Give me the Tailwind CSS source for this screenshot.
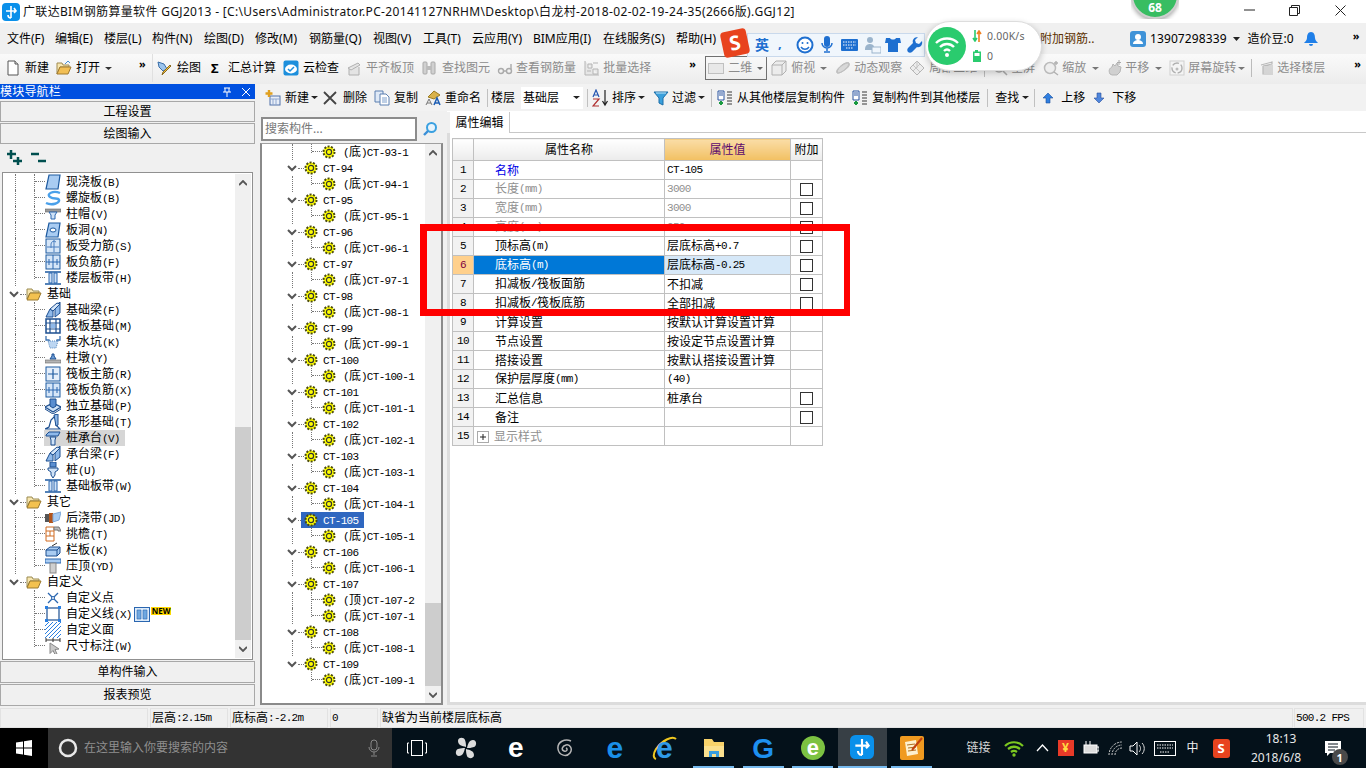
<!DOCTYPE html>
<html lang="zh">
<head>
<meta charset="utf-8">
<title>GGJ2013</title>
<script src="https://cdn.jsdelivr.net/npm/@tailwindcss/browser@4"></script>
</head>
<body class="m-0 overflow-hidden">
<svg class="absolute w-0 h-0" aria-hidden="true">
<defs>
<symbol id="gear" viewBox="0 0 14 14"><circle cx="7" cy="7" r="5.5" fill="#ffff00" stroke="#4a4a10" stroke-width="2" stroke-dasharray="2 1.4"/><circle cx="7" cy="7" r="2.6" fill="#ffff00" stroke="#333" stroke-width="1.2"/></symbol>
<symbol id="chev" viewBox="0 0 12 12"><path d="M2 4l4 4 4-4" fill="none" stroke="#555" stroke-width="2"/></symbol>
<symbol id="folder" viewBox="0 0 16 14"><path d="M1 2h5l1 2h6v2H4L1 12z" fill="#f7e6b0" stroke="#9a8a50"/><path d="M4 6h11l-3 7H1z" fill="#f3c14f" stroke="#9a7a30"/></symbol>
<symbol id="app" viewBox="0 0 18 18"><rect width="18" height="18" rx="4" fill="#0a90ea"/><path d="M9 3v12M4 8h10M9 15c-3 0-3-3-3-3M12 5l2 3-2 2" fill="none" stroke="#fff" stroke-width="1.6"/></symbol>
<symbol id="doc" viewBox="0 0 16 16"><path d="M3 1h7l3 3v11H3z" fill="#fff" stroke="#555"/><path d="M10 1v3h3" fill="#ddd" stroke="#555"/></symbol>
<symbol id="open" viewBox="0 0 16 16"><path d="M1 3h5l1 2h6v2H4l-3 7z" fill="#f7e6b0" stroke="#a08a50"/><path d="M4 7h11l-3 7H1z" fill="#f2bf55" stroke="#a07a30"/><path d="M9 4l3-3 2 2" fill="none" stroke="#4a90d0"/></symbol>
<symbol id="draw" viewBox="0 0 16 16"><path d="M1 2l6 2 3 5-4 2-4-4z" fill="#9cc4ec" stroke="#3a6ea8"/><path d="M14 6L7 13l-2 2 1-3 7-7z" fill="#f0c040" stroke="#8a6a20"/></symbol>
<symbol id="cloud" viewBox="0 0 16 16"><rect x=".5" y=".5" width="15" height="15" rx="2" fill="#1d8fdc"/><ellipse cx="8" cy="9" rx="6" ry="4.4" fill="#fff"/><path d="M5 9l2 2 4-4" fill="none" stroke="#1d8fdc" stroke-width="1.5"/></symbol>
<symbol id="g-flush" viewBox="0 0 16 16"><path d="M2 8l10-5 2 2-9 5zM3 9v6h10V7" fill="#e4e4e4" stroke="#b0b0b0"/></symbol>
<symbol id="g-bino" viewBox="0 0 16 16"><rect x="2" y="2" width="4" height="12" rx="1" fill="#d0d0d0" stroke="#aaa"/><rect x="10" y="2" width="4" height="12" rx="1" fill="#d0d0d0" stroke="#aaa"/><path d="M6 6h4v4H6z" fill="#bbb"/></symbol>
<symbol id="g-glass" viewBox="0 0 16 16"><circle cx="4" cy="11" r="2.5" fill="none" stroke="#aaa" stroke-width="1.4"/><circle cx="12" cy="11" r="2.5" fill="none" stroke="#aaa" stroke-width="1.4"/><path d="M6.5 11h3M14 9V4" stroke="#aaa" fill="none" stroke-width="1.4"/></symbol>
<symbol id="g-batch" viewBox="0 0 16 16"><path d="M1 1v14h14M4 4h4v4H4zM9 9h5v5H9z" fill="#e6e6e6" stroke="#b5b5b5"/><path d="M3 11h4M9 3h5" stroke="#b5b5b5"/></symbol>
<symbol id="g-cube" viewBox="0 0 16 16"><path d="M1 5l4-4h10v10l-4 4H1z" fill="#ececec" stroke="#b0b0b0"/><path d="M1 5h10v10M11 5l4-4" fill="none" stroke="#b0b0b0"/></symbol>
<symbol id="g-orbit" viewBox="0 0 16 16"><path d="M2 13C5 14 14 8 14 3 11 1 2 7 2 13z" fill="#d8d8d8" stroke="#b8b8b8"/><ellipse cx="8" cy="8" rx="7.5" ry="2.5" transform="rotate(-35 8 8)" fill="none" stroke="#c0c0c0"/></symbol>
<symbol id="g-part" viewBox="0 0 16 16"><path d="M1 8l7-7 7 7-7 7z" fill="#ececec" stroke="#b5b5b5"/><path d="M4 5l7 7M8 1v7M11 4l-7 7" stroke="#c5c5c5" fill="none"/></symbol>
<symbol id="g-zoom" viewBox="0 0 16 16"><circle cx="7" cy="8" r="5.5" fill="#eee" stroke="#bbb" stroke-width="1.5"/><path d="M11 12l4 3M13 1v4M11 3h4" stroke="#b0b0b0" stroke-width="1.4" fill="none"/></symbol>
<symbol id="g-pan" viewBox="0 0 16 16"><path d="M3 14C1 10 3 8 5 7l1-3 2 2 2-3 1 3 3 1-1 5-3 3H5z" fill="#d0d0d0" stroke="#b5b5b5"/><path d="M12 0v5M10 2.500h4" stroke="#aaa" fill="none"/></symbol>
<symbol id="g-rot" viewBox="0 0 16 16"><rect x="1" y="1" width="14" height="14" fill="#f4f4f4" stroke="#d0d0d0"/><circle cx="8" cy="8" r="5" fill="none" stroke="#b0b0b0" stroke-width="1.4" stroke-dasharray="7 2"/><circle cx="8" cy="9" r="1.500" fill="#bbb"/></symbol>
<symbol id="g-layer" viewBox="0 0 16 16"><path d="M2 5l11-3v2L4 6h10M4 6v2h10M4 8v2h10M4 10v2h10M4 12v2h10" fill="none" stroke="#b8b8b8" stroke-width="1.200"/></symbol>
<symbol id="g-screen" viewBox="0 0 16 16"><circle cx="7" cy="7" r="5" fill="#eee" stroke="#aaa" stroke-width="1.400"/><path d="M11 11l4 4" stroke="#aaa" stroke-width="1.600"/></symbol>
<symbol id="new2" viewBox="0 0 16 16"><rect x="5" y="6" width="10" height="9" fill="#e8eef8" stroke="#5070a8"/><path d="M5 9h10M8 9v6M11 9v6" stroke="#90a8d0"/><path d="M4 0v7M.5 3.500h7" stroke="#e0a020" stroke-width="2.400"/></symbol>
<symbol id="copy" viewBox="0 0 16 16"><path d="M1 1h8v11H1z" fill="#dfe9f6" stroke="#5b7fb0"/><path d="M6 4h6l3 3v8H6z" fill="#fff" stroke="#5b7fb0"/><path d="M8 8h5M8 10h5M8 12h5" stroke="#7fa0cc"/></symbol>
<symbol id="rename" viewBox="0 0 16 16"><path d="M3 7l6-6 6 4-6 4z" fill="#d9b24a" stroke="#9a7a20"/><path d="M1 15l3-6 3 6M2 13h4" fill="none" stroke="#777"/><path d="M9 15l3-7 3 7M10 13h4" fill="none" stroke="#1f5fb4" stroke-width="1.500"/></symbol>
<symbol id="sort" viewBox="0 0 18 18"><path d="M1 8l3-7 3 7M2 6h4" fill="none" stroke="#2555b0" stroke-width="1.200"/><path d="M1 10h6L1 17h6" fill="none" stroke="#b03030" stroke-width="1.200"/><path d="M13 1v15M10.500 12l2.500 4 2.500-4" fill="none" stroke="#222" stroke-width="1.200"/></symbol>
<symbol id="funnel" viewBox="0 0 16 16"><path d="M1 2h14L10 8v7l-4-2V8z" fill="#3aa0dc" stroke="#1c6ea8"/><path d="M3 3h10" stroke="#bfe4f8"/></symbol>
<symbol id="cp1" viewBox="0 0 16 16"><path d="M1 1h6v9H1z" fill="#fff" stroke="#2a55a0"/><path d="M2 3h4M2 5h4" stroke="#2a55a0"/><path d="M10 2h5M10 5h5M10 8h5M10 11h5M10 14h5" stroke="#777" stroke-width="1.500"/><path d="M4 11v4M2 13h4" stroke="#1a9a40" stroke-width="2"/></symbol>
<symbol id="up" viewBox="0 0 12 12"><path d="M6 1l5 5H8v5H4V6H1z" fill="#2f7fe0" stroke="#1b4f9c" stroke-width=".6"/></symbol>
<symbol id="down" viewBox="0 0 12 12"><path d="M6 11L1 6h3V1h4v5h3z" fill="#4f86dc" stroke="#2a4f9c" stroke-width=".6"/></symbol>
<symbol id="i-slab" viewBox="0 0 16 16"><path d="M4 1h11l-2 14H1z" fill="#a9ccf2" stroke="#1d5aa0" stroke-width="1.200"/></symbol>
<symbol id="i-spiral" viewBox="0 0 16 16"><path d="M15 3C8 0 1 4 5 7s8 0 9 3-7 6-13 3" fill="none" stroke="#4aa0ea" stroke-width="2.400"/></symbol>
<symbol id="i-cap" viewBox="0 0 16 16"><rect y="3" width="16" height="3" fill="#9a9a9a" stroke="#666" stroke-width=".6"/><path d="M4 6h8l-2 3v4H6V9z" fill="#cfe2f7" stroke="#2a66b0"/></symbol>
<symbol id="i-hole" viewBox="0 0 16 16"><path d="M4 1h11l-2 14H1z" fill="#a9ccf2" stroke="#1d5aa0" stroke-width="1.200"/><ellipse cx="8" cy="8" rx="3" ry="2" fill="#fff" stroke="#1d5aa0"/></symbol>
<symbol id="i-force" viewBox="0 0 16 16"><rect x="1" y="1" width="14" height="14" fill="#d6e6f8" stroke="#1d5aa0"/><path d="M9 2v12M2 9h12M11 4a3 3 0 0 0-5 2v4" fill="none" stroke="#4a7fc0"/></symbol>
<symbol id="i-neg" viewBox="0 0 16 16"><rect x="1" y="1" width="14" height="14" fill="#d6e6f8" stroke="#1d5aa0"/><path d="M8 1v14M1 8h14M4 5v6M12 5v6" fill="none" stroke="#2a66b0"/></symbol>
<symbol id="i-band" viewBox="0 0 16 16"><path d="M0 2h16M0 14h16" stroke="#1d5aa0" stroke-width="1.500"/><path d="M4 3h3v10H4zM9 3h3v10H9z" fill="#cfe2f7" stroke="#2a66b0"/></symbol>
<symbol id="i-beam" viewBox="0 0 16 16"><path d="M1 15l4-8 3 2v6zM10 15V4l5-4v11z" fill="#8fb9ea" stroke="#1d4f90"/><path d="M5 7l7-6 3 1-7 7z" fill="#d6e6f8" stroke="#1d4f90"/></symbol>
<symbol id="i-raft" viewBox="0 0 16 16"><rect x="1" y="1" width="14" height="14" fill="#fff" stroke="#1d4f90" stroke-width="1.500"/><path d="M1 5h14M1 11h14M5 1v14M11 1v14" stroke="#1d4f90" stroke-width="1.200"/><rect x="6" y="6" width="4" height="4" fill="#8fb9ea"/></symbol>
<symbol id="i-pit" viewBox="0 0 16 16"><path d="M1 2v4h3l2 7h4l2-7h3V2" fill="none" stroke="#3a70b0" stroke-width="1.300"/><path d="M3 7h10l-2 7H5z" fill="#bcd6f2" stroke-dasharray="1 1" stroke="#5a8ac0"/></symbol>
<symbol id="i-pier" viewBox="0 0 16 16"><path d="M5 9l2-3V4h2v2l2 3z" fill="#6f9fd8" stroke="#1d4f90"/><rect y="10" width="16" height="3" fill="#b5b5b5" stroke="#666" stroke-width=".6"/></symbol>
<symbol id="i-main" viewBox="0 0 16 16"><rect x="1" y="1" width="14" height="14" fill="#e4eefa" stroke="#1d5aa0"/><path d="M8 3v10M3 8h10" stroke="#1d5aa0" stroke-width="1.200"/></symbol>
<symbol id="i-iso" viewBox="0 0 16 16"><path d="M0 9l8-4 8 4-8 5z" fill="#cfe2f7" stroke="#1d4f90" stroke-width="1.200"/><path d="M0 9v2l8 5 8-5V9" fill="none" stroke="#1d4f90"/><path d="M5 1h6v7l-3 2-3-2z" fill="#5a8ed0" stroke="#1d4f90"/></symbol>
<symbol id="i-strip" viewBox="0 0 16 16"><path d="M0 15l4-2 2-7 5-5v10l4 4z" fill="#fff" stroke="#1d4f90" stroke-width="1.200"/><path d="M9 1l4-1v11l-2 1z" fill="#8fb9ea" stroke="#1d4f90"/></symbol>
<symbol id="i-cap2" viewBox="0 0 16 16"><path d="M1 5l3-3h11l-2 4H1z" fill="#8fb9ea" stroke="#1d4f90"/><path d="M5 7h6l-1 3v5H6v-5z" fill="#cfe2f7" stroke="#1d4f90"/></symbol>
<symbol id="i-pile" viewBox="0 0 16 16"><rect x="5" y="0" width="6" height="5" fill="#5a8ed0" stroke="#1d4f90"/><path d="M3 6h10v2l-3 2v3l-2 3-2-3v-3L3 8z" fill="#cfe2f7" stroke="#1d4f90"/></symbol>
<symbol id="i-post" viewBox="0 0 16 16"><rect x="0" y="4" width="6" height="8" fill="#555"/><rect x="4" y="3" width="4" height="10" fill="#b3541a"/><path d="M8 4l8-2-2 8-6 2z" fill="#a9ccf2" stroke="#7fa8d8"/></symbol>
<symbol id="i-eave" viewBox="0 0 16 16"><path d="M1 1h8v14H1z" fill="#fff" stroke="#d06a20"/><path d="M1 5h8M1 10h8M5 5v5" stroke="#d06a20"/><path d="M9 1h5l2 4h-3v-1H9z" fill="#bbb" stroke="#777"/></symbol>
<symbol id="i-rail" viewBox="0 0 16 16"><path d="M1 8l4-3h10v6l-3 3H1z" fill="#a9ccf2" stroke="#1d4f90"/><path d="M1 8h11v6M12 8l3-3" fill="none" stroke="#1d4f90"/><path d="M7 4l5-3" stroke="#333"/></symbol>
<symbol id="i-coping" viewBox="0 0 16 16"><rect y="1" width="16" height="4" fill="#a9ccf2" stroke="#2a66b0"/><rect x="5" y="5" width="6" height="10" fill="#cfcfcf" stroke="#888"/></symbol>
<symbol id="i-pt" viewBox="0 0 16 16"><path d="M3 3l10 10M13 3L3 13" stroke="#2a66b0" stroke-width="1.300"/><circle cx="8" cy="8" r="1.500" fill="#fff" stroke="#2a66b0"/></symbol>
<symbol id="i-line" viewBox="0 0 16 16"><rect x="2" y="2" width="12" height="12" fill="#fff" stroke="#1d4f90" stroke-width="1.200"/><path d="M0 0h3v3H0zM13 0h3v3h-3zM0 13h3v3H0zM13 13h3v3h-3z" fill="#2a7fe0"/></symbol>
<symbol id="i-face" viewBox="0 0 16 16"><path d="M0 4l4-4M0 8l8-8M0 12L12 0M0 16L16 0M4 16L16 4M8 16l8-8M12 16l4-4" stroke="#2a7fe0" stroke-width="1"/></symbol>
<symbol id="i-dim" viewBox="0 0 16 16"><path d="M1 0v4M15 0v4M8 0v4M1 2h14" stroke="#333"/><path d="M5 5l9 6-4 .5L12 16l-2 .5-2-4-3 3z" fill="#c8c8c8" stroke="#888"/></symbol>
</defs>
</svg>

<div class="relative flex h-[768px] w-[1366px] flex-col overflow-hidden bg-[#f0f0f0] text-[12px] leading-4 text-black [font-family:'Noto_Sans','Noto_Sans_CJK_SC',sans-serif] [&_i]:not-italic [&_i]:[font-family:'Liberation_Mono',monospace] [&_i]:text-[11px] [&_i]:tracking-[-0.7px]">

  <!-- title bar -->
  <header class="flex h-[23px] shrink-0 items-center bg-white">
    <svg class="ml-[2px] h-[18px] w-[18px]"><use href="#app"/></svg>
    <span class="ml-[3px] whitespace-nowrap text-[12px] tracking-[0.33px] text-[#111]">广联达BIM钢筋算量软件 GGJ2013 - [C:\Users\Administrator.PC-20141127NRHM\Desktop\白龙村-2018-02-02-19-24-35(2666版).GGJ12]</span>
  </header>

  <!-- menu bar -->
  <nav class="flex h-[31px] shrink-0 items-center whitespace-nowrap bg-[#f0f0f0]">
    <span class="ml-[7px] w-[48px]">文件(F)</span><span class="w-[49px]">编辑(E)</span><span class="w-[48px]">楼层(L)</span><span class="w-[52px]">构件(N)</span><span class="w-[51px]">绘图(D)</span><span class="w-[54px]">修改(M)</span><span class="w-[64px]">钢筋量(Q)</span><span class="w-[50px]">视图(V)</span><span class="w-[49px]">工具(T)</span><span class="w-[61px]">云应用(Y)</span><span class="w-[70px]">BIM应用(I)</span><span class="w-[73px]">在线服务(S)</span><span class="w-[364px]">帮助(H)</span><span class="w-[90px] text-[#5c3000]">附加钢筋..</span>
    <svg class="h-4 w-4"><rect width="16" height="16" rx="3" fill="#3f93d8"/><circle cx="8" cy="6" r="3" fill="#fff"/><path d="M3 13h10c0-3-3-4-5-4s-5 1-5 4z" fill="#fff"/></svg>
    <span class="ml-[4px] text-[12px] tracking-[0.1px]">13907298339</span>
    <svg class="ml-[6px] h-[4px] w-[7px]"><path d="M0 0h7L3.500 4z" fill="#222"/></svg>
    <span class="ml-[8px]">造价豆:0</span>
    <svg class="ml-[10px] h-[16px] w-[14px]" viewBox="0 0 14 16"><path d="M7 1c3 0 4 3 4 6 0 2 2 4 3 5H0c1-1 3-3 3-5 0-3 1-6 4-6zM5 13h4a2 2 0 0 1-4 0z" fill="#1f7fe8"/></svg>
    <span class="ml-[35px] -mt-[6px] text-[11px] font-bold leading-3">»</span>
  </nav>

  <!-- main toolbar -->
  <div class="flex h-[30px] shrink-0 items-center whitespace-nowrap bg-gradient-to-b from-[#fafafa] to-[#ececec] pb-[2px]">
    <svg class="ml-[5px] h-4 w-4"><use href="#doc"/></svg><span class="ml-[4px]">新建</span>
    <svg class="ml-[7px] h-4 w-4"><use href="#open"/></svg><span class="ml-[4px]">打开</span>
    <svg class="ml-[5px] h-[3px] w-[7px]"><path d="M0 0h7L3.500 3z" fill="#333"/></svg>
    <span class="ml-[27px] -mt-[8px] w-[13px] text-[11px] font-bold leading-3">»</span>
    <span class="h-full w-px bg-[#e0e0e0]"></span>
    <svg class="ml-[4px] h-4 w-4"><use href="#draw"/></svg><span class="ml-[4px]">绘图</span>
    <span class="ml-[10px] w-[17px] text-[13px] font-bold">Σ</span><span>汇总计算</span>
    <svg class="ml-[7px] h-4 w-4"><use href="#cloud"/></svg><span class="ml-[4px]">云检查</span>
    <svg class="ml-[7px] h-4 w-4"><use href="#g-flush"/></svg><span class="ml-[4px] text-[#8c8c8c]">平齐板顶</span>
    <svg class="ml-[7px] h-4 w-4"><use href="#g-bino"/></svg><span class="ml-[5px] text-[#8c8c8c]">查找图元</span>
    <svg class="ml-[7px] h-4 w-4"><use href="#g-glass"/></svg><span class="ml-[3px] text-[#8c8c8c]">查看钢筋量</span>
    <svg class="ml-[8px] h-4 w-4"><use href="#g-batch"/></svg><span class="ml-[3px] text-[#8c8c8c]">批量选择</span>
    <span class="ml-[38px] -mt-[8px] w-[16px] text-[11px] font-bold leading-3">»</span>
    <span class="flex h-[24px] w-[62px] items-center border border-[#707070] text-[#8c8c8c]"><span class="ml-[2px] h-[11px] w-[16px] border border-[#c0c0c0] bg-[#e8e8e8]"></span><span class="ml-[4px]">二维</span><svg class="ml-[5px] h-[3px] w-[6px]"><path d="M0 0h6L3 3z" fill="#666"/></svg></span>
    <svg class="ml-[4px] h-4 w-4"><use href="#g-cube"/></svg><span class="ml-[4px] text-[#8c8c8c]">俯视</span>
    <svg class="ml-[5px] h-[3px] w-[7px]"><path d="M0 0h7L3.500 3z" fill="#777"/></svg>
    <svg class="ml-[8px] h-4 w-4"><use href="#g-orbit"/></svg><span class="ml-[3px] text-[#8c8c8c]">动态观察</span>
    <svg class="ml-[7px] h-4 w-4"><use href="#g-part"/></svg><span class="ml-[4px] text-[#8c8c8c]">局部三维</span>
    <span class="ml-[7px] h-[18px] w-px bg-[#bbb]"></span>
    <svg class="ml-[7px] h-4 w-4"><use href="#g-screen"/></svg><span class="ml-[3px] text-[#8c8c8c]">全屏</span>
    <svg class="ml-[8px] h-4 w-4"><use href="#g-zoom"/></svg><span class="ml-[3px] text-[#8c8c8c]">缩放</span>
    <svg class="ml-[6px] h-[3px] w-[7px]"><path d="M0 0h7L3.500 3z" fill="#777"/></svg>
    <svg class="ml-[8px] h-4 w-4"><use href="#g-pan"/></svg><span class="ml-[2px] text-[#8c8c8c]">平移</span>
    <svg class="ml-[6px] h-[3px] w-[7px]"><path d="M0 0h7L3.500 3z" fill="#777"/></svg>
    <svg class="ml-[7px] h-4 w-4"><use href="#g-rot"/></svg><span class="ml-[3px] text-[#8c8c8c]">屏幕旋转</span>
    <svg class="ml-[2px] h-[3px] w-[7px]"><path d="M0 0h7L3.500 3z" fill="#777"/></svg>
    <span class="ml-[6px] h-[18px] w-px bg-[#bbb]"></span>
    <svg class="ml-[7px] h-4 w-4"><use href="#g-layer"/></svg><span class="ml-[2px] text-[#8c8c8c]">选择楼层</span>
    <span class="ml-[29px] -mt-[8px] text-[11px] font-bold leading-3">»</span>
  </div>

  <!-- body -->
  <div class="flex h-[624px] shrink-0">

    <!-- left navigator -->
    <aside class="flex w-[255px] shrink-0 flex-col">
      <div class="flex h-[15px] shrink-0 items-center bg-[#0050e0] text-white">
        <span class="tracking-[0.2px]">模块导航栏</span>
        <svg class="ml-auto h-[10px] w-[8px]" viewBox="0 0 8 10"><path d="M1 1h6M2 1v4M6 1v4M0 5h8M4 5v5" stroke="#fff" fill="none"/></svg>
        <svg class="ml-[11px] mr-[5px] h-[8px] w-[8px]" viewBox="0 0 8 8"><path d="M0 0l8 8M8 0L0 8" stroke="#fff"/></svg>
      </div>
      <div class="mt-[2px] flex h-[21px] shrink-0 items-center justify-center border border-[#a8a8a8] bg-[#f0f0f0]">工程设置</div>
      <div class="mt-px flex h-[21px] shrink-0 items-center justify-center border border-[#a8a8a8] bg-[#f0f0f0]">绘图输入</div>
      <div class="flex h-[28px] shrink-0 items-center gap-[7px] pb-[2px] pl-[6px]">
        <svg class="h-[17px] w-[17px]" viewBox="0 0 17 17"><path d="M1 5h9M5 1v9M7 12h9M12 8v8" stroke="#004f4f" stroke-width="2.500" fill="none"/></svg>
        <svg class="h-[17px] w-[17px]" viewBox="0 0 17 17"><path d="M1 5h8M8 12h8" stroke="#004f4f" stroke-width="2.500" fill="none"/></svg>
      </div>
      <div class="mx-[2px] flex h-[488px] shrink-0 border border-[#909090] bg-white pt-[1px]">
        <div class="w-[232px] shrink-0 overflow-hidden [&_b]:ml-[12px] [&_b]:block [&_b]:h-4 [&_b]:w-px [&_b]:shrink-0 [&_b]:border-l [&_b]:border-dotted [&_b]:border-[#777] [&_u]:ml-[18px] [&_u]:block [&_u]:h-4 [&_u]:w-[11px] [&_u]:shrink-0 [&_u]:border-l [&_u]:border-dotted [&_u]:border-[#777] [&_s]:block [&_s]:h-2 [&_s]:border-b [&_s]:border-dotted [&_s]:border-[#777]">
          <div class="flex h-4 items-center"><b></b><u><s></s></u><svg class="h-4 w-4 shrink-0"><use href="#i-slab"/></svg><span class="ml-[5px]">现浇板<i>(B)</i></span></div>
          <div class="flex h-4 items-center"><b></b><u><s></s></u><svg class="h-4 w-4 shrink-0"><use href="#i-spiral"/></svg><span class="ml-[5px]">螺旋板<i>(B)</i></span></div>
          <div class="flex h-4 items-center"><b></b><u><s></s></u><svg class="h-4 w-4 shrink-0"><use href="#i-cap"/></svg><span class="ml-[5px]">柱帽<i>(V)</i></span></div>
          <div class="flex h-4 items-center"><b></b><u><s></s></u><svg class="h-4 w-4 shrink-0"><use href="#i-hole"/></svg><span class="ml-[5px]">板洞<i>(N)</i></span></div>
          <div class="flex h-4 items-center"><b></b><u><s></s></u><svg class="h-4 w-4 shrink-0"><use href="#i-force"/></svg><span class="ml-[5px]">板受力筋<i>(S)</i></span></div>
          <div class="flex h-4 items-center"><b></b><u><s></s></u><svg class="h-4 w-4 shrink-0"><use href="#i-neg"/></svg><span class="ml-[5px]">板负筋<i>(F)</i></span></div>
          <div class="flex h-4 items-center"><b></b><u class="h-[9px]! self-start"><s></s></u><svg class="h-4 w-4 shrink-0"><use href="#i-band"/></svg><span class="ml-[5px]">楼层板带<i>(H)</i></span></div>

          <div class="flex h-4 items-center"><svg class="ml-[5px] h-3 w-3 shrink-0"><use href="#chev"/></svg><span class="w-[6px] shrink-0 border-b border-dotted border-[#777]"></span><svg class="h-[14px] w-4 shrink-0"><use href="#folder"/></svg><span class="ml-[5px]">基础</span></div>
          <div class="flex h-4 items-center"><b></b><u><s></s></u><svg class="h-4 w-4 shrink-0"><use href="#i-beam"/></svg><span class="ml-[5px]">基础梁<i>(F)</i></span></div>
          <div class="flex h-4 items-center"><b></b><u><s></s></u><svg class="h-4 w-4 shrink-0"><use href="#i-raft"/></svg><span class="ml-[5px]">筏板基础<i>(M)</i></span></div>
          <div class="flex h-4 items-center"><b></b><u><s></s></u><svg class="h-4 w-4 shrink-0"><use href="#i-pit"/></svg><span class="ml-[5px]">集水坑<i>(K)</i></span></div>
          <div class="flex h-4 items-center"><b></b><u><s></s></u><svg class="h-4 w-4 shrink-0"><use href="#i-pier"/></svg><span class="ml-[5px]">柱墩<i>(Y)</i></span></div>
          <div class="flex h-4 items-center"><b></b><u><s></s></u><svg class="h-4 w-4 shrink-0"><use href="#i-main"/></svg><span class="ml-[5px]">筏板主筋<i>(R)</i></span></div>
          <div class="flex h-4 items-center"><b></b><u><s></s></u><svg class="h-4 w-4 shrink-0"><use href="#i-neg"/></svg><span class="ml-[5px]">筏板负筋<i>(X)</i></span></div>
          <div class="flex h-4 items-center"><b></b><u><s></s></u><svg class="h-4 w-4 shrink-0"><use href="#i-iso"/></svg><span class="ml-[5px]">独立基础<i>(P)</i></span></div>
          <div class="flex h-4 items-center"><b></b><u><s></s></u><svg class="h-4 w-4 shrink-0"><use href="#i-strip"/></svg><span class="ml-[5px]">条形基础<i>(T)</i></span></div>
          <div class="flex h-4 items-center"><b></b><u><s></s></u><span class="-ml-px flex h-4 w-[81px] items-center bg-[#d6d6d6] pl-px"><svg class="h-4 w-4 shrink-0"><use href="#i-cap2"/></svg><span class="ml-[5px]">桩承台<i>(V)</i></span></span></div>
          <div class="flex h-4 items-center"><b></b><u><s></s></u><svg class="h-4 w-4 shrink-0"><use href="#i-beam"/></svg><span class="ml-[5px]">承台梁<i>(F)</i></span></div>
          <div class="flex h-4 items-center"><b></b><u><s></s></u><svg class="h-4 w-4 shrink-0"><use href="#i-pile"/></svg><span class="ml-[5px]">桩<i>(U)</i></span></div>
          <div class="flex h-4 items-center"><b></b><u class="h-[9px]! self-start"><s></s></u><svg class="h-4 w-4 shrink-0"><use href="#i-band"/></svg><span class="ml-[5px]">基础板带<i>(W)</i></span></div>

          <div class="flex h-4 items-center"><svg class="ml-[5px] h-3 w-3 shrink-0"><use href="#chev"/></svg><span class="w-[6px] shrink-0 border-b border-dotted border-[#777]"></span><svg class="h-[14px] w-4 shrink-0"><use href="#folder"/></svg><span class="ml-[5px]">其它</span></div>
          <div class="flex h-4 items-center"><b></b><u><s></s></u><svg class="h-4 w-4 shrink-0"><use href="#i-post"/></svg><span class="ml-[5px]">后浇带<i>(JD)</i></span></div>
          <div class="flex h-4 items-center"><b></b><u><s></s></u><svg class="h-4 w-4 shrink-0"><use href="#i-eave"/></svg><span class="ml-[5px]">挑檐<i>(T)</i></span></div>
          <div class="flex h-4 items-center"><b></b><u><s></s></u><svg class="h-4 w-4 shrink-0"><use href="#i-rail"/></svg><span class="ml-[5px]">栏板<i>(K)</i></span></div>
          <div class="flex h-4 items-center"><b></b><u class="h-[9px]! self-start"><s></s></u><svg class="h-4 w-4 shrink-0"><use href="#i-coping"/></svg><span class="ml-[5px]">压顶<i>(YD)</i></span></div>

          <div class="flex h-4 items-center"><svg class="ml-[5px] h-3 w-3 shrink-0"><use href="#chev"/></svg><span class="w-[6px] shrink-0 border-b border-dotted border-[#777]"></span><svg class="h-[14px] w-4 shrink-0"><use href="#folder"/></svg><span class="ml-[5px]">自定义</span></div>
          <div class="flex h-4 items-center"><b class="invisible"></b><u><s></s></u><svg class="h-4 w-4 shrink-0"><use href="#i-pt"/></svg><span class="ml-[5px]">自定义点</span></div>
          <div class="flex h-4 items-center"><b class="invisible"></b><u><s></s></u><svg class="h-4 w-4 shrink-0"><use href="#i-line"/></svg><span class="ml-[5px]">自定义线<i>(X)</i></span><svg class="ml-[2px] h-[15px] w-[16px] shrink-0" viewBox="0 0 16 15"><rect x=".5" y=".5" width="15" height="14" fill="#dcebfa" stroke="#2a66b0"/><path d="M3 3h4v9H3zM9 3h4v9H9z" fill="#6fa8e0" stroke="#2a66b0" stroke-width=".6"/></svg><span class="-mt-[6px] ml-px bg-[#ffd800] px-px text-[8px] font-bold leading-[8px] text-black">NEW</span></div>
          <div class="flex h-4 items-center"><b class="invisible"></b><u><s></s></u><svg class="h-4 w-4 shrink-0"><use href="#i-face"/></svg><span class="ml-[5px]">自定义面</span></div>
          <div class="flex h-4 items-center"><b class="invisible"></b><u class="h-[9px]! self-start"><s></s></u><svg class="h-4 w-4 shrink-0"><use href="#i-dim"/></svg><span class="ml-[5px]">尺寸标注<i>(W)</i></span></div>
        </div>
        <div class="flex h-[484px] w-[16px] shrink-0 flex-col bg-[#f0f0f0]">
          <div class="flex h-[17px] shrink-0 items-center justify-center"><svg class="h-[6px] w-[8px]" viewBox="0 0 8 6"><path d="M0 5l4-4 4 4" fill="none" stroke="#555" stroke-width="1.800"/></svg></div>
          <div class="mt-[236px] h-[213px] shrink-0 bg-[#cdcdcd]"></div>
          <div class="flex h-[18px] shrink-0 items-center justify-center"><svg class="h-[6px] w-[8px]" viewBox="0 0 8 6"><path d="M0 1l4 4 4-4" fill="none" stroke="#555" stroke-width="1.800"/></svg></div>
        </div>
      </div>
      <div class="mt-px flex h-[22px] shrink-0 items-center justify-center border border-[#a8a8a8] bg-[#f0f0f0]">单构件输入</div>
      <div class="mt-px flex h-[22px] shrink-0 items-center justify-center border border-[#a8a8a8] bg-[#f0f0f0]">报表预览</div>
    </aside>

    <!-- right area -->
    <div class="ml-[5px] flex w-[1106px] shrink-0 flex-col">
      <!-- toolbar 2 -->
      <div class="flex h-[27px] shrink-0 items-center whitespace-nowrap bg-[#f2f2f2]">
        <svg class="ml-[5px] h-4 w-4"><use href="#new2"/></svg><span class="ml-[4px]">新建</span>
        <svg class="ml-[2px] h-[3px] w-[7px]"><path d="M0 0h7L3.500 3z" fill="#222"/></svg>
        <svg class="ml-[5px] h-[14px] w-[14px]" viewBox="0 0 14 14"><path d="M1 1l12 12M13 1L1 13" stroke="#444" stroke-width="1.800"/></svg><span class="ml-[6px]">删除</span>
        <svg class="ml-[7px] h-4 w-4"><use href="#copy"/></svg><span class="ml-[4px]">复制</span>
        <svg class="ml-[7px] h-4 w-4"><use href="#rename"/></svg><span class="ml-[4px]">重命名</span>
        <span class="ml-[6px] h-[18px] w-px bg-[#c0c0c0]"></span>
        <span class="ml-[3px]">楼层</span>
        <span class="ml-[6px] flex h-[22px] w-[62px] items-center bg-white pl-[2px]">基础层<svg class="ml-[14px] h-[3px] w-[7px]"><path d="M0 0h7L3.500 3z" fill="#222"/></svg></span>
        <span class="ml-[4px] h-[18px] w-px bg-[#c0c0c0]"></span>
        <svg class="ml-[4px] h-[18px] w-[18px]"><use href="#sort"/></svg><span class="ml-[2px]">排序</span>
        <svg class="ml-[2px] h-[3px] w-[7px]"><path d="M0 0h7L3.500 3z" fill="#222"/></svg>
        <svg class="ml-[8px] h-4 w-4"><use href="#funnel"/></svg><span class="ml-[3px]">过滤</span>
        <svg class="ml-[2px] h-[3px] w-[7px]"><path d="M0 0h7L3.500 3z" fill="#222"/></svg>
        <span class="ml-[6px] h-[18px] w-px bg-[#c0c0c0]"></span>
        <svg class="ml-[5px] h-4 w-4"><use href="#cp1"/></svg><span class="ml-[4px]">从其他楼层复制构件</span>
        <svg class="ml-[7px] h-4 w-4"><use href="#cp1"/></svg><span class="ml-[4px]">复制构件到其他楼层</span>
        <span class="ml-[7px] h-[18px] w-px bg-[#c0c0c0]"></span>
        <span class="ml-[7px]">查找</span>
        <svg class="ml-[3px] h-[3px] w-[7px]"><path d="M0 0h7L3.500 3z" fill="#222"/></svg>
        <span class="ml-[5px] h-[18px] w-px bg-[#c0c0c0]"></span>
        <svg class="ml-[7px] h-3 w-3"><use href="#up"/></svg><span class="ml-[7px]">上移</span>
        <svg class="ml-[8px] h-3 w-3"><use href="#down"/></svg><span class="ml-[7px]">下移</span>
      </div>

      <div class="flex h-[594px] shrink-0">
        <!-- component tree column -->
        <section class="flex h-[594px] w-[183px] shrink-0 flex-col">
          <div class="flex h-[32px] shrink-0 items-center pt-[4px]">
            <div class="ml-px flex h-[24px] w-[156px] items-center border-2 border-[#8c8c8c] bg-white pl-[2px] text-[#777]">搜索构件...</div>
            <svg class="ml-[5px] h-[16px] w-[16px]" viewBox="0 0 16 16"><circle cx="9.500" cy="6.500" r="4.500" fill="#e8f4fc" stroke="#3aa0e0" stroke-width="2"/><path d="M6 10l-4 4" stroke="#3a90d8" stroke-width="2.400"/></svg>
          </div>
          <div class="flex h-[562px] shrink-0 border-2 border-t border-[#8a8a8a] border-t-[#a0a0a0] bg-white">
            <div class="w-[163px] shrink-0 overflow-hidden [&_b]:ml-[30px] [&_b]:block [&_b]:h-4 [&_b]:w-px [&_b]:shrink-0 [&_b]:border-l [&_b]:border-dotted [&_b]:border-[#777] [&_u]:ml-[18px] [&_u]:block [&_u]:h-4 [&_u]:w-[11px] [&_u]:shrink-0 [&_u]:border-l [&_u]:border-dotted [&_u]:border-[#777] [&_s]:block [&_s]:h-2 [&_s]:border-b [&_s]:border-dotted [&_s]:border-[#777]">
              <div class="flex h-4 items-center"><b></b><u class="h-[9px]! self-start"><s></s></u><svg class="h-[14px] w-[14px] shrink-0"><use href="#gear"/></svg><span class="ml-[7px]"><i>(</i>底<i>)CT-93-1</i></span></div>
              <div class="flex h-4 items-center"><svg class="ml-[24px] h-3 w-3 shrink-0"><use href="#chev"/></svg><span class="w-[6px] shrink-0 border-b border-dotted border-[#777]"></span><svg class="h-[14px] w-[14px] shrink-0"><use href="#gear"/></svg><span class="ml-[5px]"><i>CT-94</i></span></div>
              <div class="flex h-4 items-center"><b></b><u class="h-[9px]! self-start"><s></s></u><svg class="h-[14px] w-[14px] shrink-0"><use href="#gear"/></svg><span class="ml-[7px]"><i>(</i>底<i>)CT-94-1</i></span></div>
              <div class="flex h-4 items-center"><svg class="ml-[24px] h-3 w-3 shrink-0"><use href="#chev"/></svg><span class="w-[6px] shrink-0 border-b border-dotted border-[#777]"></span><svg class="h-[14px] w-[14px] shrink-0"><use href="#gear"/></svg><span class="ml-[5px]"><i>CT-95</i></span></div>
              <div class="flex h-4 items-center"><b></b><u class="h-[9px]! self-start"><s></s></u><svg class="h-[14px] w-[14px] shrink-0"><use href="#gear"/></svg><span class="ml-[7px]"><i>(</i>底<i>)CT-95-1</i></span></div>
              <div class="flex h-4 items-center"><svg class="ml-[24px] h-3 w-3 shrink-0"><use href="#chev"/></svg><span class="w-[6px] shrink-0 border-b border-dotted border-[#777]"></span><svg class="h-[14px] w-[14px] shrink-0"><use href="#gear"/></svg><span class="ml-[5px]"><i>CT-96</i></span></div>
              <div class="flex h-4 items-center"><b></b><u class="h-[9px]! self-start"><s></s></u><svg class="h-[14px] w-[14px] shrink-0"><use href="#gear"/></svg><span class="ml-[7px]"><i>(</i>底<i>)CT-96-1</i></span></div>
              <div class="flex h-4 items-center"><svg class="ml-[24px] h-3 w-3 shrink-0"><use href="#chev"/></svg><span class="w-[6px] shrink-0 border-b border-dotted border-[#777]"></span><svg class="h-[14px] w-[14px] shrink-0"><use href="#gear"/></svg><span class="ml-[5px]"><i>CT-97</i></span></div>
              <div class="flex h-4 items-center"><b></b><u class="h-[9px]! self-start"><s></s></u><svg class="h-[14px] w-[14px] shrink-0"><use href="#gear"/></svg><span class="ml-[7px]"><i>(</i>底<i>)CT-97-1</i></span></div>
              <div class="flex h-4 items-center"><svg class="ml-[24px] h-3 w-3 shrink-0"><use href="#chev"/></svg><span class="w-[6px] shrink-0 border-b border-dotted border-[#777]"></span><svg class="h-[14px] w-[14px] shrink-0"><use href="#gear"/></svg><span class="ml-[5px]"><i>CT-98</i></span></div>
              <div class="flex h-4 items-center"><b></b><u class="h-[9px]! self-start"><s></s></u><svg class="h-[14px] w-[14px] shrink-0"><use href="#gear"/></svg><span class="ml-[7px]"><i>(</i>底<i>)CT-98-1</i></span></div>
              <div class="flex h-4 items-center"><svg class="ml-[24px] h-3 w-3 shrink-0"><use href="#chev"/></svg><span class="w-[6px] shrink-0 border-b border-dotted border-[#777]"></span><svg class="h-[14px] w-[14px] shrink-0"><use href="#gear"/></svg><span class="ml-[5px]"><i>CT-99</i></span></div>
              <div class="flex h-4 items-center"><b></b><u class="h-[9px]! self-start"><s></s></u><svg class="h-[14px] w-[14px] shrink-0"><use href="#gear"/></svg><span class="ml-[7px]"><i>(</i>底<i>)CT-99-1</i></span></div>
              <div class="flex h-4 items-center"><svg class="ml-[24px] h-3 w-3 shrink-0"><use href="#chev"/></svg><span class="w-[6px] shrink-0 border-b border-dotted border-[#777]"></span><svg class="h-[14px] w-[14px] shrink-0"><use href="#gear"/></svg><span class="ml-[5px]"><i>CT-100</i></span></div>
              <div class="flex h-4 items-center"><b></b><u class="h-[9px]! self-start"><s></s></u><svg class="h-[14px] w-[14px] shrink-0"><use href="#gear"/></svg><span class="ml-[7px]"><i>(</i>底<i>)CT-100-1</i></span></div>
              <div class="flex h-4 items-center"><svg class="ml-[24px] h-3 w-3 shrink-0"><use href="#chev"/></svg><span class="w-[6px] shrink-0 border-b border-dotted border-[#777]"></span><svg class="h-[14px] w-[14px] shrink-0"><use href="#gear"/></svg><span class="ml-[5px]"><i>CT-101</i></span></div>
              <div class="flex h-4 items-center"><b></b><u class="h-[9px]! self-start"><s></s></u><svg class="h-[14px] w-[14px] shrink-0"><use href="#gear"/></svg><span class="ml-[7px]"><i>(</i>底<i>)CT-101-1</i></span></div>
              <div class="flex h-4 items-center"><svg class="ml-[24px] h-3 w-3 shrink-0"><use href="#chev"/></svg><span class="w-[6px] shrink-0 border-b border-dotted border-[#777]"></span><svg class="h-[14px] w-[14px] shrink-0"><use href="#gear"/></svg><span class="ml-[5px]"><i>CT-102</i></span></div>
              <div class="flex h-4 items-center"><b></b><u class="h-[9px]! self-start"><s></s></u><svg class="h-[14px] w-[14px] shrink-0"><use href="#gear"/></svg><span class="ml-[7px]"><i>(</i>底<i>)CT-102-1</i></span></div>
              <div class="flex h-4 items-center"><svg class="ml-[24px] h-3 w-3 shrink-0"><use href="#chev"/></svg><span class="w-[6px] shrink-0 border-b border-dotted border-[#777]"></span><svg class="h-[14px] w-[14px] shrink-0"><use href="#gear"/></svg><span class="ml-[5px]"><i>CT-103</i></span></div>
              <div class="flex h-4 items-center"><b></b><u class="h-[9px]! self-start"><s></s></u><svg class="h-[14px] w-[14px] shrink-0"><use href="#gear"/></svg><span class="ml-[7px]"><i>(</i>底<i>)CT-103-1</i></span></div>
              <div class="flex h-4 items-center"><svg class="ml-[24px] h-3 w-3 shrink-0"><use href="#chev"/></svg><span class="w-[6px] shrink-0 border-b border-dotted border-[#777]"></span><svg class="h-[14px] w-[14px] shrink-0"><use href="#gear"/></svg><span class="ml-[5px]"><i>CT-104</i></span></div>
              <div class="flex h-4 items-center"><b></b><u class="h-[9px]! self-start"><s></s></u><svg class="h-[14px] w-[14px] shrink-0"><use href="#gear"/></svg><span class="ml-[7px]"><i>(</i>底<i>)CT-104-1</i></span></div>
              <div class="flex h-4 items-center"><svg class="ml-[24px] h-3 w-3 shrink-0"><use href="#chev"/></svg><span class="w-[3px] shrink-0 border-b border-dotted border-[#777]"></span><span class="flex h-4 w-[63px] items-center bg-[#2f67c0] pl-[3px] text-white"><svg class="h-[14px] w-[14px] shrink-0"><use href="#gear"/></svg><span class="ml-[5px]"><i>CT-105</i></span></span></div>
              <div class="flex h-4 items-center"><b></b><u class="h-[9px]! self-start"><s></s></u><svg class="h-[14px] w-[14px] shrink-0"><use href="#gear"/></svg><span class="ml-[7px]"><i>(</i>底<i>)CT-105-1</i></span></div>
              <div class="flex h-4 items-center"><svg class="ml-[24px] h-3 w-3 shrink-0"><use href="#chev"/></svg><span class="w-[6px] shrink-0 border-b border-dotted border-[#777]"></span><svg class="h-[14px] w-[14px] shrink-0"><use href="#gear"/></svg><span class="ml-[5px]"><i>CT-106</i></span></div>
              <div class="flex h-4 items-center"><b></b><u class="h-[9px]! self-start"><s></s></u><svg class="h-[14px] w-[14px] shrink-0"><use href="#gear"/></svg><span class="ml-[7px]"><i>(</i>底<i>)CT-106-1</i></span></div>
              <div class="flex h-4 items-center"><svg class="ml-[24px] h-3 w-3 shrink-0"><use href="#chev"/></svg><span class="w-[6px] shrink-0 border-b border-dotted border-[#777]"></span><svg class="h-[14px] w-[14px] shrink-0"><use href="#gear"/></svg><span class="ml-[5px]"><i>CT-107</i></span></div>
              <div class="flex h-4 items-center"><b></b><u><s></s></u><svg class="h-[14px] w-[14px] shrink-0"><use href="#gear"/></svg><span class="ml-[7px]"><i>(</i>顶<i>)CT-107-2</i></span></div>
              <div class="flex h-4 items-center"><b></b><u class="h-[9px]! self-start"><s></s></u><svg class="h-[14px] w-[14px] shrink-0"><use href="#gear"/></svg><span class="ml-[7px]"><i>(</i>底<i>)CT-107-1</i></span></div>
              <div class="flex h-4 items-center"><svg class="ml-[24px] h-3 w-3 shrink-0"><use href="#chev"/></svg><span class="w-[6px] shrink-0 border-b border-dotted border-[#777]"></span><svg class="h-[14px] w-[14px] shrink-0"><use href="#gear"/></svg><span class="ml-[5px]"><i>CT-108</i></span></div>
              <div class="flex h-4 items-center"><b></b><u class="h-[9px]! self-start"><s></s></u><svg class="h-[14px] w-[14px] shrink-0"><use href="#gear"/></svg><span class="ml-[7px]"><i>(</i>底<i>)CT-108-1</i></span></div>
              <div class="flex h-4 items-center"><svg class="ml-[24px] h-3 w-3 shrink-0"><use href="#chev"/></svg><span class="w-[6px] shrink-0 border-b border-dotted border-[#777]"></span><svg class="h-[14px] w-[14px] shrink-0"><use href="#gear"/></svg><span class="ml-[5px]"><i>CT-109</i></span></div>
              <div class="flex h-4 items-center"><b class="invisible"></b><u class="h-[9px]! self-start"><s></s></u><svg class="h-[14px] w-[14px] shrink-0"><use href="#gear"/></svg><span class="ml-[7px]"><i>(</i>底<i>)CT-109-1</i></span></div>
            </div>
            <div class="flex w-[16px] shrink-0 flex-col bg-[#f0f0f0]">
              <div class="flex h-[17px] shrink-0 items-center justify-center"><svg class="h-[6px] w-[8px]" viewBox="0 0 8 6"><path d="M0 5l4-4 4 4" fill="none" stroke="#555" stroke-width="1.800"/></svg></div>
              <div class="mt-[442px] h-[83px] shrink-0 bg-[#cdcdcd]"></div>
              <div class="flex h-[17px] shrink-0 items-center justify-center"><svg class="h-[6px] w-[8px]" viewBox="0 0 8 6"><path d="M0 1l4 4 4-4" fill="none" stroke="#555" stroke-width="1.800"/></svg></div>
            </div>
          </div>
        </section>

        <!-- properties -->
        <section class="ml-[4px] flex h-[594px] w-[919px] shrink-0 flex-col bg-white pt-px">
          <div class="flex h-[21px] shrink-0 bg-[#f0f0f0] pl-[3px]">
            <span class="flex w-[60px] items-center justify-center border-r border-[#c8c8c8] bg-white pt-[1px]">属性编辑</span>
            <span class="flex-1 border-b border-[#c8c8c8] bg-white"></span>
          </div>
          <div class="h-[572px] border-b-[3px] border-l-[3px] border-[#dcdcdc] pl-[2px] pt-[5px]">
            <table class="w-[370px] table-fixed border-collapse [&_td]:h-[19px] [&_td]:border [&_td]:border-[#c0c0c0] [&_td]:p-0 [&_td]:pt-[1px] [&_td_i]:relative [&_td_i]:-top-px [&_th]:border [&_th]:border-[#c0c0c0] [&_th]:font-normal">
              <colgroup><col class="w-[21px]"><col class="w-[191px]"><col class="w-[126px]"><col class="w-[32px]"></colgroup>
              <tr class="h-[22px]"><th class="bg-gradient-to-b from-white to-[#ebebeb]"></th><th class="bg-gradient-to-b from-white to-[#ebebeb]">属性名称</th><th class="bg-gradient-to-b from-[#fadda6] to-[#f2c060] text-[#5c0a6e]">属性值</th><th class="bg-gradient-to-b from-white to-[#ebebeb]">附加</th></tr>
              <tr><td class="bg-[#f2f2f2] text-center"><i>1</i></td><td class="pl-[21px]! text-[#0000e6]">名称</td><td class="pl-[2px]!"><i>CT-105</i></td><td></td></tr>
              <tr><td class="bg-[#f2f2f2] text-center"><i>2</i></td><td class="pl-[21px]! text-[#909090]">长度<i>(mm)</i></td><td class="pl-[2px]! text-[#909090]"><i>3000</i></td><td><span class="mx-auto block h-[13px] w-[13px] border border-[#333] bg-white"></span></td></tr>
              <tr><td class="bg-[#f2f2f2] text-center"><i>3</i></td><td class="pl-[21px]! text-[#909090]">宽度<i>(mm)</i></td><td class="pl-[2px]! text-[#909090]"><i>3000</i></td><td><span class="mx-auto block h-[13px] w-[13px] border border-[#333] bg-white"></span></td></tr>
              <tr><td class="bg-[#f2f2f2] text-center"><i>4</i></td><td class="pl-[21px]! text-[#909090]">高度<i>(mm)</i></td><td class="pl-[2px]! text-[#909090]"><i>950</i></td><td><span class="mx-auto block h-[13px] w-[13px] border border-[#333] bg-white"></span></td></tr>
              <tr><td class="bg-[#f2f2f2] text-center"><i>5</i></td><td class="pl-[21px]!">顶标高<i>(m)</i></td><td class="pl-[2px]!">层底标高<i>+0.7</i></td><td><span class="mx-auto block h-[13px] w-[13px] border border-[#333] bg-white"></span></td></tr>
              <tr><td class="bg-[#ffd08c] text-center text-[#800040]"><i>6</i></td><td class="bg-[#0078d7] pl-[21px]! text-white">底标高<i>(m)</i></td><td class="bg-[#d6e8f8] pl-[2px]!">层底标高<i>-0.25</i></td><td><span class="mx-auto block h-[13px] w-[13px] border border-[#333] bg-white"></span></td></tr>
              <tr><td class="bg-[#f2f2f2] text-center"><i>7</i></td><td class="pl-[21px]!">扣减板<i>/</i>筏板面筋</td><td class="pl-[2px]!">不扣减</td><td><span class="mx-auto block h-[13px] w-[13px] border border-[#333] bg-white"></span></td></tr>
              <tr><td class="bg-[#f2f2f2] text-center"><i>8</i></td><td class="pl-[21px]!">扣减板<i>/</i>筏板底筋</td><td class="pl-[2px]!">全部扣减</td><td><span class="mx-auto block h-[13px] w-[13px] border border-[#333] bg-white"></span></td></tr>
              <tr><td class="bg-[#f2f2f2] text-center"><i>9</i></td><td class="pl-[21px]!">计算设置</td><td class="pl-[2px]!">按默认计算设置计算</td><td></td></tr>
              <tr><td class="bg-[#f2f2f2] text-center"><i>10</i></td><td class="pl-[21px]!">节点设置</td><td class="pl-[2px]!">按设定节点设置计算</td><td></td></tr>
              <tr><td class="bg-[#f2f2f2] text-center"><i>11</i></td><td class="pl-[21px]!">搭接设置</td><td class="pl-[2px]!">按默认搭接设置计算</td><td></td></tr>
              <tr><td class="bg-[#f2f2f2] text-center"><i>12</i></td><td class="pl-[21px]!">保护层厚度<i>(mm)</i></td><td class="pl-[2px]!"><i>(40)</i></td><td></td></tr>
              <tr><td class="bg-[#f2f2f2] text-center"><i>13</i></td><td class="pl-[21px]!">汇总信息</td><td class="pl-[2px]!">桩承台</td><td><span class="mx-auto block h-[13px] w-[13px] border border-[#333] bg-white"></span></td></tr>
              <tr><td class="bg-[#f2f2f2] text-center"><i>14</i></td><td class="pl-[21px]!">备注</td><td></td><td><span class="mx-auto block h-[13px] w-[13px] border border-[#333] bg-white"></span></td></tr>
              <tr><td class="bg-[#f2f2f2] text-center"><i>15</i></td><td class="text-[#909090]"><span class="flex items-center"><svg class="ml-[3px] h-[12px] w-[12px] shrink-0" viewBox="0 0 12 12"><rect x=".5" y=".5" width="11" height="11" fill="#fff" stroke="#aaa"/><path d="M3 6h6M6 3v6" stroke="#222"/></svg><span class="ml-[5px]">显示样式</span></span></td><td></td><td></td></tr>
            </table>
          </div>
        </section>
      </div>
    </div>
  </div>

  <!-- status bar -->
  <footer class="flex h-[20px] shrink-0 items-center bg-[#f0f0f0] whitespace-nowrap [&>span]:flex [&>span]:h-[20px] [&>span]:items-center [&>span]:border [&>span]:border-[#e2e2e2] [&>span]:pl-[1px]">
    <span class="w-[148px]"></span>
    <span class="ml-[2px] w-[78px]">层高<i>:2.15m</i></span>
    <span class="ml-[2px] w-[98px]">底标高<i>:-2.2m</i></span>
    <span class="ml-[2px] w-[48px]"><i>0</i></span>
    <span class="ml-[2px] w-[913px]">缺省为当前楼层底标高</span>
    <span class="ml-px w-[70px]"><i>500.2 FPS</i></span>
  </footer>

  <!-- taskbar -->
  <div class="flex h-[40px] shrink-0 items-center whitespace-nowrap bg-[#04111a] text-white">
    <div class="flex h-full w-[48px] shrink-0 items-center justify-center bg-black"><svg class="h-[16px] w-[16px]" viewBox="0 0 16 16"><path d="M0 2.500l7-1V7.500H0zM8 1.300L16 0v7.500H8zM0 8.500h7v6l-7-1zM8 8.500h8V16l-8-1.200z" fill="#fff"/></svg></div>
    <div class="flex h-full w-[344px] shrink-0 items-center bg-[#333333]">
      <svg class="ml-[10px] h-[20px] w-[20px]" viewBox="0 0 20 20"><circle cx="10" cy="10" r="8" fill="none" stroke="#e8e8e8" stroke-width="2.500"/></svg>
      <span class="ml-[6px] text-[#8f8f8f]">在这里输入你要搜索的内容</span>
      <svg class="ml-auto mr-[12px] h-[18px] w-[12px]" viewBox="0 0 12 18"><rect x="3" y="1" width="6" height="10" rx="3" fill="none" stroke="#888"/><path d="M1 8a5 5 0 0 0 10 0M6 13v3M3 17h6" fill="none" stroke="#888"/></svg>
    </div>
    <div class="flex h-full w-[49.500px] shrink-0 items-center justify-center"><svg class="h-[16px] w-[20px]" viewBox="0 0 20 16"><rect x="4.500" y=".5" width="11" height="15" fill="none" stroke="#fff"/><path d="M2 3H.5v10H2M18 3h1.500v10H18" fill="none" stroke="#fff"/></svg></div>
    <div class="flex h-full w-[49.500px] shrink-0 items-center justify-center"><svg class="h-[22px] w-[22px]" viewBox="0 0 22 22"><path d="M11 10C7 9 3 8 3 4s6-4 7-1 1 5 1 7zM12 11c1-4 2-8 6-8s4 6 1 7-5 1-7 1zM11 12c4 1 8 2 8 6s-6 4-7 1-1-5-1-7zM10 11c-1 4-2 8-6 8s-4-6-1-7 5-1 7-1z" fill="#dcdcdc"/></svg></div>
    <div class="flex h-full w-[49.500px] shrink-0 items-center justify-center"><span class="text-[28px] font-bold leading-[26px] text-white [font-family:'Liberation_Sans',sans-serif]">e</span></div>
    <div class="flex h-full w-[49.500px] shrink-0 items-center justify-center"><svg class="h-[20px] w-[20px]" viewBox="0 0 20 20"><path d="M16 3C10 0 2 4 3 11s9 8 12 4 0-9-4-8-5 5-2 6 4-2 2-3" fill="none" stroke="#b5b5b5" stroke-width="1.500"/></svg></div>
    <div class="flex h-full w-[49.500px] shrink-0 items-center justify-center"><span class="text-[30px] font-bold leading-[26px] text-[#1a8fe8] [font-family:'Liberation_Sans',sans-serif]">e</span></div>
    <div class="relative flex h-full w-[49.500px] shrink-0 items-center justify-center"><svg class="absolute left-[12px] top-[7px] h-[26px] w-[26px]" viewBox="0 0 26 26"><path d="M24 4C20 0 10 6 4 14c-3 5-3 9 0 10" fill="none" stroke="#f0c820" stroke-width="2"/></svg><span class="relative text-[30px] font-bold leading-[26px] text-[#2f9ae8] [font-family:'Liberation_Sans',sans-serif]">e</span></div>
    <div class="flex h-full w-[49.500px] shrink-0 flex-col items-center justify-between pt-[9px]"><svg class="h-[22px] w-[22px]" viewBox="0 0 22 22"><path d="M1 2h8l2 3h10v15H1z" fill="#f8d26a"/><path d="M1 9h20v11H1z" fill="#fbe08e"/><path d="M6 20v-6h10v6h-3v-3H9v3z" fill="#3a9ee0"/></svg><span class="h-[2px] w-[41px] bg-[#76b9ed]"></span></div>
    <div class="flex h-full w-[49.500px] shrink-0 flex-col items-center justify-between pt-[6px]"><span class="text-[28px] font-bold leading-[30px] text-[#1e90f0] [font-family:'Liberation_Sans',sans-serif]">G</span><span class="h-[2px] w-[41px] bg-[#76b9ed]"></span></div>
    <div class="flex h-full w-[49.500px] shrink-0 flex-col items-center justify-between pt-[8px]"><span class="flex h-[24px] w-[24px] items-center justify-center rounded-full bg-[#7cc242] text-[22px] font-bold leading-[20px] text-white [font-family:'Liberation_Sans',sans-serif]">e</span><span class="h-[2px] w-[41px] bg-[#76b9ed]"></span></div>
    <div class="flex h-full w-[49.500px] shrink-0 flex-col items-center justify-between bg-[#373f45] pt-[7px]"><svg class="h-[24px] w-[24px]"><use href="#app"/></svg><span class="h-[2px] w-full bg-[#76b9ed]"></span></div>
    <div class="flex h-full w-[49.500px] shrink-0 flex-col items-center justify-between pt-[8px]"><svg class="h-[24px] w-[24px]" viewBox="0 0 24 24"><rect width="24" height="24" rx="2" fill="#f09a20"/><path d="M5 6l11-2 2 14-11 2z" fill="#fdf0cf"/><path d="M7 9l8-1M8 12l8-1M8 15l8-1" stroke="#b07020"/><path d="M22 2L12 14" stroke="#c04010" stroke-width="2"/></svg><span class="h-[2px] w-[41px] bg-[#76b9ed]"></span></div>
    <span class="ml-[30px] text-[#d8d8d8]">链接</span>
    <svg class="ml-[13px] h-[20px] w-[20px]" viewBox="0 0 20 20"><path d="M1 8c5-5 13-5 18 0M4 11c4-3 8-3 12 0M7 14c2-1.500 4-1.500 6 0" fill="none" stroke="#7cc820" stroke-width="2.200"/><circle cx="10" cy="17" r="1.700" fill="#7cc820"/></svg>
    <svg class="ml-[12px] h-[8px] w-[13px]" viewBox="0 0 13 8"><path d="M1 7l5.500-6L12 7" fill="none" stroke="#fff" stroke-width="1.300"/></svg>
    <span class="ml-[9px] flex h-[16px] w-[16px] items-center justify-center bg-[#e83a28] text-[12px] font-bold text-[#ffd840]">¥</span>
    <svg class="ml-[8px] h-[16px] w-[17px]" viewBox="0 0 17 16"><rect x="2" y="5" width="13" height="8" fill="#ddd" stroke="#fff"/><path d="M15 7h2v4h-2M4 1v4M8 1v4" stroke="#fff" fill="none"/></svg>
    <svg class="ml-[9px] h-[15px] w-[15px]" viewBox="0 0 15 15"><path d="M1 14a13 13 0 0 1 13-13M4 14a10 10 0 0 1 10-10M7 14a7 7 0 0 1 7-7" fill="none" stroke="#cfcfcf" stroke-dasharray="2 1"/></svg>
    <svg class="ml-[6px] h-[15px] w-[17px]" viewBox="0 0 17 15"><path d="M1 5h3l4-4v13l-4-4H1z" fill="none" stroke="#fff"/><path d="M10 4c2 2 2 5 0 7M13 2c3 3 3 8 0 11" fill="none" stroke="#ddd"/></svg>
    <svg class="ml-[8px] h-[15px] w-[22px]" viewBox="0 0 22 15"><rect x=".5" y=".5" width="21" height="14" fill="none" stroke="#fff"/><path d="M3 4h16M3 7h16M6 11h10" stroke="#fff" stroke-dasharray="1.500 1"/></svg>
    <span class="ml-[11px] text-[#f0f0f0]">中</span>
    <span class="ml-[14px] flex h-[19px] w-[17px] items-center justify-center rounded-[3px] bg-[#e8431e] text-[13px] font-bold leading-none text-white">S</span>
    <div class="ml-[20px] flex w-[53px] flex-col items-center text-[12px] leading-[19px] text-[#e8e8e8]"><span class="ml-[10px]">18:13</span><span>2018/6/8</span></div>
    <div class="relative ml-[22px] flex h-full w-[16px] items-center"><svg class="h-[15px] w-[16px]" viewBox="0 0 16 15"><path d="M0 0h16v12H5l-3 3v-3H0z" fill="#fff"/><path d="M3 3h10M3 6h10M3 9h7" stroke="#04111a"/></svg><span class="absolute left-[7px] top-[21px] flex h-[16px] w-[16px] items-center justify-center rounded-full bg-[#4a4a4a] text-[11px] font-bold leading-none text-white">1</span></div>
  </div>

  <!-- overlays -->
  <div class="pointer-events-none absolute left-[420px] top-[224px] h-[92px] w-[430px] border-[7px] border-r-[6px] border-[#ff0000]"></div>

  <div class="absolute left-[747px] top-[33px] flex h-[24px] w-[178px] items-center border border-[#c9d9ec] bg-[#f0f6fc] text-[#1e6fd0]">
    <span class="ml-[7px] text-[14px] font-bold leading-none">英</span>
    <span class="ml-[9px] -mt-[4px] text-[13px] font-bold leading-none">,</span>
    <svg class="ml-[14px] h-[18px] w-[18px]" viewBox="0 0 18 18"><circle cx="9" cy="9" r="7.500" fill="#fff" stroke="#1e6fd0" stroke-width="2"/><circle cx="6.500" cy="7" r="1" fill="#1e6fd0"/><circle cx="11.500" cy="7" r="1" fill="#1e6fd0"/><path d="M5 11c2 3 6 3 8 0" fill="none" stroke="#1e6fd0" stroke-width="1.400"/></svg>
    <svg class="ml-[7px] h-[18px] w-[12px]" viewBox="0 0 12 18"><rect x="3" y="0" width="6" height="11" rx="3" fill="#1e6fd0"/><path d="M1 7a5 5 0 0 0 10 0M6 12v3M3 16h6" fill="none" stroke="#1e6fd0" stroke-width="1.500"/></svg>
    <svg class="ml-[8px] h-[12px] w-[17px]" viewBox="0 0 17 12"><rect width="17" height="12" rx="1" fill="#1e6fd0"/><path d="M2 3h13M2 6h13M5 9h7" stroke="#fff" stroke-dasharray="1.500 1"/></svg>
    <svg class="ml-[5px] h-[18px] w-[18px]" viewBox="0 0 18 18"><circle cx="7" cy="4" r="3" fill="#9bb4cc"/><path d="M2 13c0-4 3-5 5-5s4 1 4 3v3H2z" fill="#9bb4cc"/><rect x="9" y="11" width="9" height="6" fill="#f0f6fc" stroke="#9bb4cc"/></svg>
    <svg class="ml-[4px] h-[16px] w-[16px]" viewBox="0 0 16 16"><path d="M5 1H1L0 6h3v9h10V6h3l-1-5h-4c-1 2-5 2-6 0z" fill="#1e6fd0"/></svg>
    <svg class="ml-[6px] h-[16px] w-[16px]" viewBox="0 0 16 16"><path d="M15 4l-3 3-3-1-1-3 3-3c-4 0-6 3-5 6L1 11c-1 1-1 3 0 4s3 1 4 0l5-5c3 1 6-2 5-6z" fill="#1e6fd0"/></svg>
  </div>
  <div class="absolute left-[722px] top-[30px] flex h-[26px] w-[26px] -rotate-12 items-center justify-center rounded-[4px] bg-[#e8431e] text-[20px] font-bold leading-none text-white">S</div>

  <div class="absolute left-[1131px] top-0 flex h-[19px] w-[48px] items-end justify-center overflow-hidden pb-[5px]">
    <span class="absolute -top-[29px] left-0 h-[48px] w-[48px] rounded-full border-2 border-[#cfcfcf] bg-[#38bd62] shadow-[0_2px_4px_#0005]"></span>
    <span class="relative text-[12px] font-bold leading-none text-white">68</span>
  </div>

  <div class="absolute left-[925px] top-[21px] flex h-[50px] w-[117px] items-center rounded-full border border-[#ddd] bg-white shadow-[0_2px_6px_#0003]">
    <span class="ml-[2px] flex h-[38px] w-[38px] items-center justify-center rounded-full bg-[#2acb6e]"><svg class="h-[24px] w-[26px]" viewBox="0 0 26 24"><path d="M2 9c6-6 16-6 22 0M6 13c4-4 10-4 14 0M10 17c2-2 4-2 6 0" fill="none" stroke="#fff" stroke-width="2.400"/><circle cx="13" cy="21" r="2" fill="#fff"/></svg></span>
    <div class="ml-[6px] flex flex-col gap-[4px] text-[10.500px] leading-4 text-[#666]">
      <span class="flex items-center"><svg class="h-[12px] w-[10px]" viewBox="0 0 10 12"><path d="M3 0v10M1 8l2 3 2-3" fill="none" stroke="#2acb6e" stroke-width="1.600"/><path d="M7 12V2M5 4l2-3 2 3" fill="none" stroke="#f08020" stroke-width="1.600"/></svg><span class="ml-[5px] tracking-[0.2px]">0.00K/s</span></span>
      <span class="flex items-center"><svg class="h-[12px] w-[10px]" viewBox="0 0 10 12"><path d="M3 0h3v1.500H9V12H1V1.500h2z" fill="#2acb6e"/><rect x="2.500" y="3" width="5" height="3" fill="#fff"/></svg><span class="ml-[5px]">0</span></span>
    </div>
  </div>

  <!-- window controls -->
  <div class="absolute right-0 top-0 flex h-[20px] items-center">
    <svg class="h-[2px] w-[11px]" viewBox="0 0 11 2"><path d="M0 1h11" stroke="#222"/></svg>
    <svg class="ml-[34px] h-[11px] w-[11px]" viewBox="0 0 11 11"><path d="M.5 2.500h8v8h-8zM2.500 2.500v-2h8v8h-2" fill="none" stroke="#222"/></svg>
    <svg class="ml-[35px] mr-[20px] h-[11px] w-[11px]" viewBox="0 0 11 11"><path d="M.5.5l10 10M10.500.5l-10 10" stroke="#222"/></svg>
  </div>
</div>
</body>
</html>
